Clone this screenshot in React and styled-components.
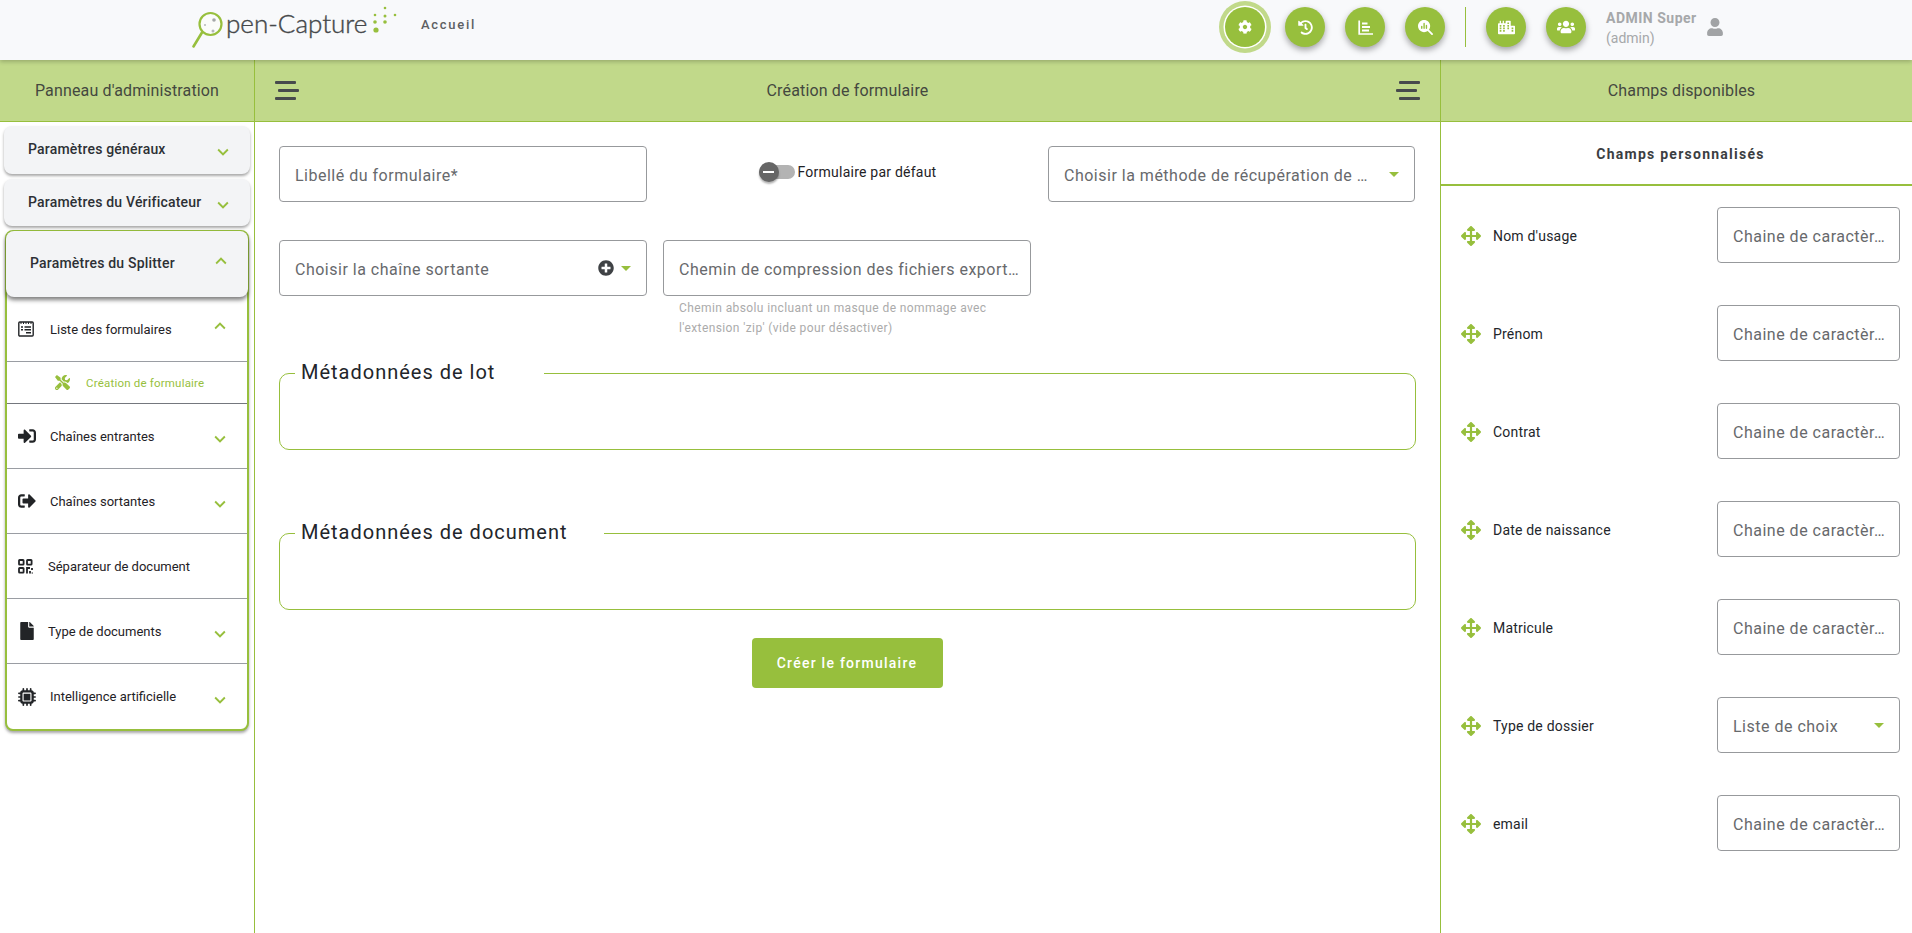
import React from 'react';
import styled, { createGlobalStyle } from 'styled-components';
import {
  FaCog, FaHistory, FaCity, FaUsers, FaUser, FaTools, FaSignInAlt, FaSignOutAlt,
  FaFile, FaArrowsAlt, FaPlusCircle,
} from 'react-icons/fa';
import { FaMagnifyingGlassChart, FaMicrochip } from 'react-icons/fa6';
import { MdExpandMore, MdExpandLess, MdArrowDropDown } from 'react-icons/md';

const GREEN = '#97BF3D';
const PALE = '#c1d98a';

const GlobalStyle = createGlobalStyle`
  html, body {
    margin: 0;
    padding: 0;
    height: 100%;
    overflow: hidden;
    background: #fff;
    font-family: Roboto, "Liberation Sans", sans-serif;
  }
  * { box-sizing: border-box; }
`;

const Page = styled.div`
  width: 1912px;
  height: 933px;
  display: flex;
  flex-direction: column;
  overflow: hidden;
`;

const TopBar = styled.header`
  height: 60px;
  flex: none;
  display: flex;
  align-items: center;
  background: #f8f9fb;
  box-shadow: 0 2px 4px rgba(0, 0, 0, 0.2);
  padding-left: 192px;
  position: relative;
  z-index: 2;
`;

const Logo = styled.div`
  display: flex;
  align-items: flex-start;
  width: 204px;
  height: 60px;
  position: relative;
`;

const LogoText = styled.span`
  font-family: Lato, sans-serif;
  font-weight: 300;
  font-size: 26px;
  line-height: 40px;
  white-space: nowrap;
  color: #45484a;
  margin-top: 3px;
  -webkit-text-stroke: 0.4px #45484a;
`;

const HomeLink = styled.a`
  margin: -12px 0 0 25px;
  font-size: 13px;
  font-weight: 500;
  letter-spacing: 1.7px;
  color: #5d6063;
`;

const TopActions = styled.div`
  margin: -6px 0 0 auto;
  display: flex;
  align-items: center;
  width: 687px;
`;

const RoundButton = styled.button`
  width: 40px;
  height: 40px;
  flex: none;
  border: 0;
  padding: 0;
  border-radius: 50%;
  color: #fff;
  background: ${GREEN};
  margin-right: 20px;
  display: flex;
  align-items: center;
  justify-content: center;
  box-shadow: ${(p) => (p.$active
    ? `0 0 0 1.5px #fff, 0 0 0 6px ${PALE}`
    : '0 3px 6px rgba(0, 0, 0, 0.35)')};
`;

const TopDivider = styled.div`
  width: 1px;
  height: 40px;
  background: ${GREEN};
  margin-right: 20px;
`;

const UserBlock = styled.div`
  display: flex;
  flex-direction: column;
  margin-top: 1px;
  color: #a6a8aa;
  font-size: 14px;
  line-height: 20px;
  width: 100px;
`;

const UserName = styled.span`
  font-weight: 700;
  letter-spacing: 0.5px;
`;

const UserIcon = styled(FaUser)`
  color: #a1a3a5;
  margin-top: 0;
`;

const Columns = styled.div`
  flex: 1;
  display: grid;
  grid-template-columns: 255px 1186px 1fr;
  min-height: 0;
`;

const Column = styled.section`
  display: flex;
  flex-direction: column;
  min-height: 0;
  border-right: ${(p) => (p.$last ? '0' : `1px solid ${GREEN}`)};
`;

const ColumnHead = styled.div`
  height: 62px;
  flex: none;
  padding: 0 20px 0 ${(p) => (p.$last ? 30 : 20)}px;
  display: flex;
  align-items: center;
  justify-content: ${(p) => (p.$spread ? 'space-between' : 'center')};
  background: ${PALE};
  border-bottom: 1px solid ${GREEN};
  color: #44483f;
  font-size: 16px;
  letter-spacing: 0.15px;
`;

const BurgerBox = styled.span`
  display: flex;
  flex-direction: column;
  align-items: ${(p) => (p.$right ? 'flex-end' : 'flex-start')};
  gap: 5px;
  width: 24px;
`;

const BurgerBar = styled.i`
  display: block;
  width: 21px;
  height: 3px;
  border-radius: 1px;
  background: #474a4c;
  transform: ${(p) => (p.$shift ? `translateX(${p.$shift}px)` : 'none')};
`;

const SideBody = styled.div`
  padding: 4px 4px 0;
  display: flex;
  flex-direction: column;
`;

const MenuCard = styled.div`
  height: 48px;
  margin-bottom: 5px;
  padding: 0 24px 0 24px;
  border-radius: 8px;
  background: #f3f4f6;
  box-shadow: 0 2px 3px rgba(0, 0, 0, 0.35);
  display: flex;
  align-items: center;
  justify-content: space-between;
  font-size: 14px;
  font-weight: 500;
  letter-spacing: 0.2px;
  color: #2d3035;

  & + & {
    height: 47px;
    margin-bottom: 4px;
  }
`;

const MenuLabel = styled.span`
  margin-top: -2px;
`;

const Chevron = styled.span`
  display: flex;
  color: ${GREEN};
  font-size: 22px;
  margin-right: ${(p) => p.$right}px;
  margin-top: ${(p) => p.$top || 0}px;
`;

const OpenPanel = styled.div`
  margin: 0 1px;
  border: 2px solid ${GREEN};
  border-radius: 8px;
  box-shadow: 0 2px 3px rgba(0, 0, 0, 0.35);
  background: #fff;
`;

const OpenHead = styled.div`
  height: 66px;
  margin: -1px -1px 0;
  padding: 0 23px 0 24px;
  border-radius: 8px;
  background: #f3f4f6;
  box-shadow: 0 3px 4px rgba(0, 0, 0, 0.5);
  display: flex;
  align-items: center;
  justify-content: space-between;
  font-size: 14px;
  font-weight: 500;
  letter-spacing: 0.2px;
  color: #2d3035;
  position: relative;
`;

const SubRow = styled.div`
  height: 65px;
  padding: 0 18px 0 11px;
  display: flex;
  align-items: center;
  border-bottom: ${(p) => (p.$last ? '0' : '1px solid #9a9da3')};
  font-size: 13px;
  color: #1f2226;
`;

const SubIcon = styled.span`
  width: ${(p) => p.$w || 32}px;
  flex: none;
  display: flex;
  align-items: center;
  color: #222427;
  font-size: 18px;
`;

const SubLabel = styled.span`
  flex: 1;
`;

const ActiveRow = styled.div`
  height: 42px;
  padding-left: 48px;
  display: flex;
  align-items: center;
  gap: 16px;
  border-bottom: 1px solid #74777d;
  color: ${GREEN};
  font-size: 11.5px;
  letter-spacing: 0.2px;
`;

const FormBody = styled.div`
  padding: 24px 24px 0;
  display: flex;
  flex-direction: column;
`;

const FormGrid = styled.div`
  display: grid;
  grid-template-columns: 368px 369px 367px;
  column-gap: 16px;
  row-gap: 38px;
  height: 217px;
  grid-template-rows: 56px 1fr;
`;

const OutlineField = styled.div`
  height: 56px;
  padding: 2px 12px 0 15px;
  width: ${(p) => (p.$small ? '183px' : 'auto')};
  flex: none;
  display: flex;
  align-items: center;
  gap: 8px;
  background: #fff;
  border: 1px solid #97999c;
  border-radius: 4px;
  color: #67696c;
  font-size: 16px;
  letter-spacing: 0.5px;
`;

const FieldText = styled.span`
  flex: 1;
  min-width: 0;
  white-space: nowrap;
`;

const SelectArrow = styled(MdArrowDropDown)`
  flex: none;
  font-size: 24px;
  color: ${GREEN};
  margin: -2px -4px 0 0;
`;

const AddIcon = styled(FaPlusCircle)`
  flex: none;
  color: #3f4245;
  font-size: 16px;
  margin: -2px -8px 0 0;
`;

const ToggleCell = styled.div`
  height: 56px;
  display: flex;
  align-items: center;
  justify-content: center;
  padding-bottom: 4px;
  font-size: 14px;
  letter-spacing: 0.23px;
  color: #1f2226;
`;

const ToggleTrack = styled.span`
  width: 36px;
  height: 14px;
  border-radius: 7px;
  background: #b3b3b3;
  margin-right: 3px;
  position: relative;
  display: block;
`;

const ToggleThumb = styled.span`
  position: absolute;
  left: 0;
  top: -3px;
  width: 20px;
  height: 20px;
  border-radius: 50%;
  background: #666;
  box-shadow: 0 2px 2px rgba(0, 0, 0, 0.3);
  display: flex;
  align-items: center;
  justify-content: center;

  &::after {
    content: '';
    width: 11px;
    height: 2px;
    background: #fff;
  }
`;

const FieldStack = styled.div`
  display: flex;
  flex-direction: column;
  padding-right: ${(p) => p.$inset || 0}px;
`;

const Hint = styled.p`
  margin: 2px 0 0;
  padding-left: 16px;
  font-size: 12px;
  line-height: 20px;
  letter-spacing: 0.4px;
  color: #ababab;
`;

const MetaBox = styled.fieldset`
  margin: 0 0 ${(p) => p.$gap}px;
  padding: 0;
  height: 87px;
  border: 1px solid ${GREEN};
  border-radius: 10px;
  min-width: 0;
`;

const MetaLegend = styled.legend`
  margin-left: 15px;
  padding: 0 ${(p) => p.$pad}px 0 6px;
  font-size: 20px;
  line-height: 24px;
  letter-spacing: 1px;
  color: #22252a;

  & > span {
    display: block;
    margin-top: -3px;
  }
`;

const SubmitRow = styled.div`
  display: flex;
  justify-content: center;
  width: 1136px;
`;

const SubmitButton = styled.button`
  width: 191px;
  height: 50px;
  border: 0;
  border-radius: 4px;
  background: ${GREEN};
  color: #fff;
  font-family: Roboto, sans-serif;
  font-size: 14px;
  font-weight: 500;
  letter-spacing: 1.25px;
`;

const TabHead = styled.div`
  height: 64px;
  flex: none;
  padding: 2px 0 0 8px;
  display: flex;
  align-items: center;
  justify-content: center;
  border-bottom: 2px solid ${GREEN};
  font-size: 14px;
  font-weight: 700;
  letter-spacing: 1.25px;
  color: #3b3e42;
`;

const FieldList = styled.div`
  padding: 21px 12px 0 20px;
  display: flex;
  flex-direction: column;
  gap: 42px;
`;

const FieldRow = styled.div`
  display: flex;
  align-items: center;
  justify-content: space-between;
`;

const FieldName = styled.div`
  display: flex;
  align-items: center;
  gap: 12px;
  padding-top: 2px;
  font-size: 14px;
  letter-spacing: 0.2px;
  color: #23262b;
`;

const MoveIcon = styled(FaArrowsAlt)`
  font-size: 20px;
  color: ${GREEN};
`;

function FormListIcon() {
  return (
    <svg width="16" height="16" viewBox="0 0 16 16" fill="none">
      <rect x="0.8" y="1" width="14.4" height="14" rx="1" stroke="#222427" strokeWidth="1.4" />
      <path d="M3 1v2M5.5 1v2M8 1v2M10.5 1v2M13 1v2" stroke="#222427" strokeWidth="1" />
      <path d="M3 6h2M6.5 6H13M3 8.8h2M6.5 8.8H13M8 11.8h5" stroke="#222427" strokeWidth="1.4" />
    </svg>
  );
}

function QrIcon() {
  return (
    <svg width="15" height="15" viewBox="0 0 15 15" fill="none" stroke="#222427" strokeWidth="1.8">
      <rect x="1" y="1" width="4.6" height="4.6" rx="0.6" />
      <rect x="9" y="1" width="4.6" height="4.6" rx="0.6" />
      <rect x="1" y="9" width="4.6" height="4.6" rx="0.6" />
      <path d="M9 14.5V9h3M14 9v2M12 12v2.5M14.5 13.5v1" />
    </svg>
  );
}

function AxisBarsIcon() {
  return (
    <svg width="15" height="15" viewBox="0 0 15 15" fill="none" stroke="#fff">
      <path d="M1.2 0.5V14H15" strokeWidth="1.7" />
      <path d="M4 3.5h5.5M4 7h8M4 10.5h7" strokeWidth="2" />
    </svg>
  );
}

function LogoGlass() {
  return (
    <svg width="34" height="48" viewBox="0 0 34 48" fill="none" style={{ flex: 'none' }}>
      <circle cx="18.5" cy="24" r="11" stroke={GREEN} strokeWidth="2.2" fill="#fbfcfa" />
      <path d="M10 32.5 L1.5 46.5" stroke={GREEN} strokeWidth="2.6" strokeLinecap="round" />
      <circle cx="22" cy="20" r="1.8" fill="#a5a7a9" />
      <circle cx="13" cy="25" r="1" fill="#b5b7b9" />
      <circle cx="21" cy="31" r="1.5" fill="#b5b7b9" />
    </svg>
  );
}

function LogoDots() {
  const dots = [
    [12, 2, 1.3], [22, 9, 1.3], [12, 10, 1.5], [2, 9, 1.3], [2, 16, 1.8], [12, 16, 1.8], [3, 24, 2.6],
  ];
  return (
    <svg width="24" height="28" viewBox="0 0 24 28" style={{ position: 'absolute', left: 181, top: 6 }}>
      {dots.map(([x, y, r]) => <circle key={`${x}-${y}`} cx={x} cy={y} r={r} fill={GREEN} />)}
    </svg>
  );
}

const fields = [
  { name: "Nom d'usage", value: 'Chaine de caractèr…' },
  { name: 'Prénom', value: 'Chaine de caractèr…' },
  { name: 'Contrat', value: 'Chaine de caractèr…' },
  { name: 'Date de naissance', value: 'Chaine de caractèr…' },
  { name: 'Matricule', value: 'Chaine de caractèr…' },
  { name: 'Type de dossier', value: 'Liste de choix', select: true },
  { name: 'email', value: 'Chaine de caractèr…' },
];

const splitterRows = [
  { icon: <FaSignInAlt />, label: 'Chaînes entrantes', w: 32, more: true },
  { icon: <FaSignOutAlt />, label: 'Chaînes sortantes', w: 32, more: true },
  { icon: <QrIcon />, label: 'Séparateur de document', w: 30 },
  { icon: <FaFile />, label: 'Type de documents', w: 30, more: true },
  { icon: <FaMicrochip />, label: 'Intelligence artificielle', w: 32, more: true, last: true },
];

function Burger({ right }) {
  return (
    <BurgerBox $right={right}>
      <BurgerBar />
      <BurgerBar $shift={right ? -3 : 3} />
      <BurgerBar />
    </BurgerBox>
  );
}

export default function App() {
  return (
    <Page>
      <GlobalStyle />
      <TopBar>
        <Logo>
          <LogoGlass />
          <LogoText>pen-Capture</LogoText>
          <LogoDots />
        </Logo>
        <HomeLink>Accueil</HomeLink>
        <TopActions>
          <RoundButton $active><FaCog size={14} /></RoundButton>
          <RoundButton><FaHistory size={15} /></RoundButton>
          <RoundButton><AxisBarsIcon /></RoundButton>
          <RoundButton><FaMagnifyingGlassChart size={15} /></RoundButton>
          <TopDivider />
          <RoundButton><FaCity size={17} /></RoundButton>
          <RoundButton><FaUsers size={18} /></RoundButton>
          <UserBlock>
            <UserName>ADMIN Super</UserName>
            <span>(admin)</span>
          </UserBlock>
          <UserIcon size={18} />
        </TopActions>
      </TopBar>
      <Columns>
        <Column>
          <ColumnHead>Panneau d'administration</ColumnHead>
          <SideBody>
            <MenuCard>
              <MenuLabel>Paramètres généraux</MenuLabel>
              <Chevron $right={-8} $top={4}><MdExpandMore /></Chevron>
            </MenuCard>
            <MenuCard>
              <MenuLabel>Paramètres du Vérificateur</MenuLabel>
              <Chevron $right={-8} $top={4}><MdExpandMore /></Chevron>
            </MenuCard>
            <OpenPanel>
              <OpenHead>
                <MenuLabel>Paramètres du Splitter</MenuLabel>
                <Chevron $right={-7} $top={-6}><MdExpandLess /></Chevron>
              </OpenHead>
              <SubRow>
                <SubIcon><FormListIcon /></SubIcon>
                <SubLabel>Liste des formulaires</SubLabel>
                <Chevron $right={-2} $top={-6}><MdExpandLess /></Chevron>
              </SubRow>
              <ActiveRow>
                <FaTools size={15} />
                Création de formulaire
              </ActiveRow>
              {splitterRows.map((row) => (
                <SubRow key={row.label} $last={row.last}>
                  <SubIcon $w={row.w}>{row.icon}</SubIcon>
                  <SubLabel>{row.label}</SubLabel>
                  {row.more && <Chevron $right={-2} $top={6}><MdExpandMore /></Chevron>}
                </SubRow>
              ))}
            </OpenPanel>
          </SideBody>
        </Column>
        <Column>
          <ColumnHead $spread>
            <Burger />
            Création de formulaire
            <Burger right />
          </ColumnHead>
          <FormBody>
            <FormGrid>
              <OutlineField><FieldText>Libellé du formulaire*</FieldText></OutlineField>
              <ToggleCell>
                <ToggleTrack><ToggleThumb /></ToggleTrack>
                Formulaire par défaut
              </ToggleCell>
              <OutlineField>
                <FieldText>Choisir la méthode de récupération de …</FieldText>
                <SelectArrow />
              </OutlineField>
              <FieldStack>
                <OutlineField>
                  <FieldText>Choisir la chaîne sortante</FieldText>
                  <AddIcon />
                  <SelectArrow />
                </OutlineField>
              </FieldStack>
              <FieldStack $inset={1}>
                <OutlineField><FieldText>Chemin de compression des fichiers export…</FieldText></OutlineField>
                <Hint>
                  Chemin absolu incluant un masque de nommage avec<br />
                  l'extension 'zip' (vide pour désactiver)
                </Hint>
              </FieldStack>
            </FormGrid>
            <MetaBox $gap={73}>
              <MetaLegend $pad={49}><span>Métadonnées de lot</span></MetaLegend>
            </MetaBox>
            <MetaBox $gap={28}>
              <MetaLegend $pad={36}><span>Métadonnées de document</span></MetaLegend>
            </MetaBox>
            <SubmitRow>
              <SubmitButton>Créer le formulaire</SubmitButton>
            </SubmitRow>
          </FormBody>
        </Column>
        <Column $last>
          <ColumnHead $last>Champs disponibles</ColumnHead>
          <TabHead>Champs personnalisés</TabHead>
          <FieldList>
            {fields.map((field) => (
              <FieldRow key={field.name}>
                <FieldName>
                  <MoveIcon />
                  {field.name}
                </FieldName>
                <OutlineField $small>
                  <FieldText>{field.value}</FieldText>
                  {field.select && <SelectArrow />}
                </OutlineField>
              </FieldRow>
            ))}
          </FieldList>
        </Column>
      </Columns>
    </Page>
  );
}
